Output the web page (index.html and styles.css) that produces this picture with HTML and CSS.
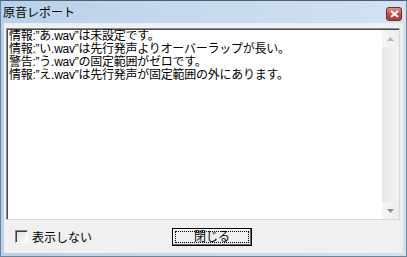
FILE: index.html
```html
<!DOCTYPE html>
<html>
<head>
  <meta charset="UTF-8" />
  <title>原音レポート</title>
  <link rel="stylesheet" href="styles.css">
</head>
<body>
  <!-- Dialog window -->
  <div id="dialog">
    <div id="titlebar">
      <div id="dialogTitle">原音レポート</div>
      <div id="closeBtn">
        <svg width="9" height="8" viewBox="0 0 9 8">
          <path d="M1 1 L8 7 M8 1 L1 7" stroke="#ffffff" stroke-width="2" fill="none" />
        </svg>
      </div>
    </div>

    <div id="client">
      <!-- Report text box with scrollbar -->
      <div id="reportBox">
        <div id="reportText">
          <div class="report-line">情報:”あ.wav”は未設定です。</div>
          <div class="report-line">情報:”い.wav”は先行発声よりオーバーラップが長い。</div>
          <div class="report-line">警告:”う.wav”の固定範囲がゼロです。</div>
          <div class="report-line">情報:”え.wav”は先行発声が固定範囲の外にあります。</div>
        </div>
        <div id="scrollbar">
          <div class="scroll-arrow">
            <svg width="7" height="4" viewBox="0 0 7 4"><path d="M0 4 L3.5 0 L7 4 Z" fill="#b4b4b4" /></svg>
          </div>
          <div class="scroll-track"></div>
          <div class="scroll-arrow">
            <svg width="7" height="4" viewBox="0 0 7 4"><path d="M0 0 L3.5 4 L7 0 Z" fill="#8c8c8c" /></svg>
          </div>
        </div>
      </div>

      <!-- Bottom controls -->
      <div id="footer">
        <label class="check-option">
          <span class="checkbox"></span>
          <span>表示しない</span>
        </label>
        <button id="closeDialogBtn"><span class="focus-rect">閉じる</span></button>
      </div>
    </div>
  </div>
</body>
</html>
```

FILE: styles.css
```css
/* Global reset & fonts */
* {
  margin: 0;
  padding: 0;
  box-sizing: border-box;
}
body {
  font-family: 'Liberation Sans', 'Noto Sans CJK JP', sans-serif;
  font-size: 12px;
  color: #000000;
  background-color: #ffffff;
  width: 407px;
  height: 257px;
  overflow: hidden;
}

/* Window frame */
#dialog {
  width: 407px;
  height: 257px;
  display: flex;
  flex-direction: column;
  background: linear-gradient(to right, #b9d1ea, #d3e2f2);
  border: 1px solid #6f8299;
  border-top-color: #4f5f72;
}

/* Title bar */
#titlebar {
  height: 22px;
  display: flex;
  align-items: center;
  padding: 0 4px 0 2px;
}
#dialogTitle {
  font-size: 12px;
  line-height: 14px;
  margin-top: 2px;
}
#closeBtn {
  margin-left: auto;
  width: 16px;
  height: 14px;
  margin-top: 3px;
  border: 1px solid #6e2a2a;
  border-radius: 3px;
  background: linear-gradient(to bottom, #e0908a, #c0504a 50%, #b03a34);
  display: flex;
  align-items: center;
  justify-content: center;
}

/* Client area */
#client {
  flex: 1;
  margin: 0 3px 3px 3px;
  background-color: #f0f0f0;
  display: flex;
  flex-direction: column;
  padding: 4px 3px 0 2px;
  border-top: 1px solid #e6eef7;
}

/* Report text box */
#reportBox {
  height: 192px;
  display: flex;
  background-color: #ffffff;
  border-top: 1px solid #8d8d8d;
  border-left: 1px solid #8d8d8d;
  border-right: 1px solid #d8d8d8;
  border-bottom: 1px solid #d8d8d8;
  box-shadow: inset 1px 1px 0 #4a4a4a;
}
#reportText {
  flex: 1;
  padding: 1px 0 0 2px;
}
.report-line {
  line-height: 13px;
  white-space: nowrap;
  letter-spacing: -0.25px;
}

/* Vertical scrollbar */
#scrollbar {
  width: 17px;
  display: flex;
  flex-direction: column;
  background: linear-gradient(to right, #e8e8e8, #f4f4f4);
  margin: 1px 0 0 0;
}
.scroll-arrow {
  height: 17px;
  display: flex;
  align-items: center;
  justify-content: center;
  background: linear-gradient(to right, #f6f6f6, #ededed);
}
.scroll-track {
  flex: 1;
}

/* Footer controls */
#footer {
  flex: 1;
  display: flex;
  align-items: center;
  padding: 0 0 0 9px;
}
.check-option {
  display: flex;
  align-items: center;
  gap: 4px;
}
.checkbox {
  width: 13px;
  height: 13px;
  background: linear-gradient(135deg, #dcdcdc, #ffffff);
  border-top: 1px solid #8a8a8a;
  border-left: 1px solid #8a8a8a;
  border-right: 1px solid #ffffff;
  border-bottom: 1px solid #ffffff;
  box-shadow: inset 1px 1px 0 #404040;
}
#closeDialogBtn {
  margin-left: 80px;
  width: 80px;
  height: 18px;
  font-family: inherit;
  font-size: 12px;
  background-color: #f0f0f0;
  border: 1px solid #000000;
  box-shadow: inset -1px -1px 0 #696969, inset 1px 1px 0 #ffffff;
  padding: 2px;
  display: flex;
}
.focus-rect {
  flex: 1;
  border: 1px dotted #000000;
  line-height: 11px;
  text-align: center;
}
```
